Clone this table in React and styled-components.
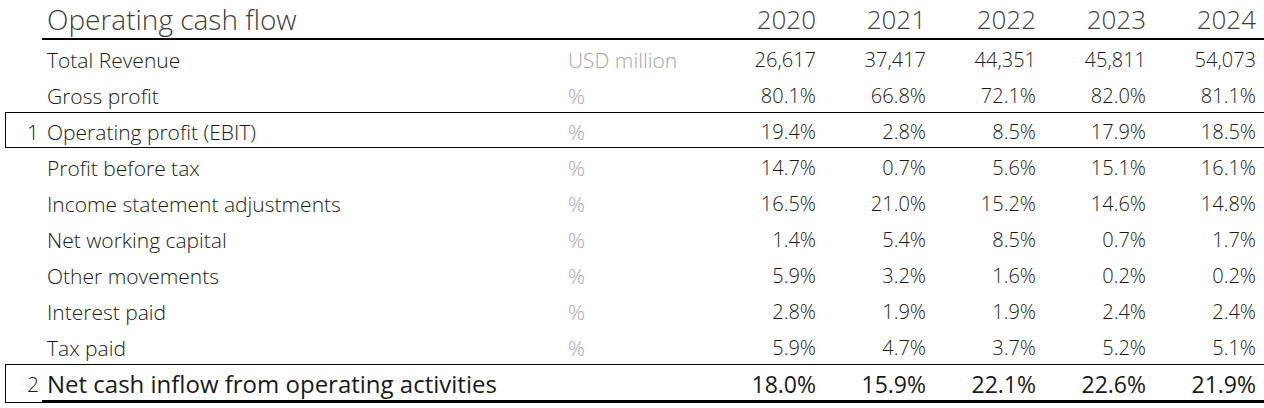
import React from "react";
import styled, { createGlobalStyle } from "styled-components";

const Global = createGlobalStyle`
  html, body { margin: 0; padding: 0; background: #fff; }
  body { font-family: "Open Sans", "Noto Sans", sans-serif; color: #1a1a1a; }
`;

const Table = styled.div`
  width: 1264px;
  display: flex;
  flex-direction: column;
`;

const Row = styled.div`
  display: flex;
  box-sizing: border-box;
  height: ${(p) => (p.$header ? 40 : p.$total ? 39 : 36)}px;
  margin-left: ${(p) => (p.$boxed ? 5 : 0)}px;
  border: ${(p) => (p.$boxed ? "1px solid #000" : "none")};
  border-right: none;
`;

const Marker = styled.div`
  box-sizing: border-box;
  width: ${(p) => (p.$boxed ? 36 : 42)}px;
  flex: none;
  display: flex;
  align-items: center;
  justify-content: flex-end;
  padding: ${(p) => (p.$total ? "0 3px 0 0" : "3px 3px 0 0")};
  font-size: 21px;
  font-weight: 300;
  color: #1a1a1a;
`;

const Body = styled.div`
  box-sizing: border-box;
  flex: 1;
  display: grid;
  grid-template-columns: 526px 140px repeat(5, 110px);
  padding: ${(p) => (p.$header ? "0 6px 4px 0" : p.$total ? "0 6px 0 0" : "3px 6px 0 0")};
  align-items: center;
  border-bottom: ${(p) => (p.$header ? "2px solid #000" : "none")};
  box-shadow: ${(p) => (p.$total ? "inset 0 -2px 0 #000" : "none")};
  font-weight: ${(p) => (p.$total ? 400 : 300)};
  color: ${(p) => (p.$header ? "#404040" : "#1a1a1a")};
  white-space: nowrap;
`;

const Label = styled.div`
  padding-left: 5px;
  font-size: ${(p) => (p.$header ? 28 : p.$total ? 24 : 21)}px;
`;

const Unit = styled.div`
  color: #a6a6a6;
  font-weight: 300;
  font-size: 21px;
`;

const Value = styled.div`
  text-align: right;
  padding-right: 2px;
  font-size: ${(p) => (p.$header ? 26 : p.$total ? 23 : 20)}px;
`;

const years = ["2020", "2021", "2022", "2023", "2024"];

const rows = [
  { label: "Total Revenue", unit: "USD million", values: ["26,617", "37,417", "44,351", "45,811", "54,073"] },
  { label: "Gross profit", unit: "%", values: ["80.1%", "66.8%", "72.1%", "82.0%", "81.1%"] },
  { label: "Operating profit (EBIT)", unit: "%", marker: "1", values: ["19.4%", "2.8%", "8.5%", "17.9%", "18.5%"] },
  { label: "Profit before tax", unit: "%", values: ["14.7%", "0.7%", "5.6%", "15.1%", "16.1%"] },
  { label: "Income statement adjustments", unit: "%", values: ["16.5%", "21.0%", "15.2%", "14.6%", "14.8%"] },
  { label: "Net working capital", unit: "%", values: ["1.4%", "5.4%", "8.5%", "0.7%", "1.7%"] },
  { label: "Other movements", unit: "%", values: ["5.9%", "3.2%", "1.6%", "0.2%", "0.2%"] },
  { label: "Interest paid", unit: "%", values: ["2.8%", "1.9%", "1.9%", "2.4%", "2.4%"] },
  { label: "Tax paid", unit: "%", values: ["5.9%", "4.7%", "3.7%", "5.2%", "5.1%"] },
  { label: "Net cash inflow from operating activities", unit: "", marker: "2", total: true, values: ["18.0%", "15.9%", "22.1%", "22.6%", "21.9%"] },
];

export default function App() {
  return (
    <>
      <Global />
      <Table>
        <Row $header>
          <Marker />
          <Body $header>
            <Label $header>Operating cash flow</Label>
            <div />
            {years.map((y) => (
              <Value key={y} $header>{y}</Value>
            ))}
          </Body>
        </Row>
        {rows.map((r) => {
          const boxed = !!r.marker;
          return (
            <Row key={r.label} $boxed={boxed} $total={r.total}>
              <Marker $boxed={boxed} $total={r.total}>{r.marker}</Marker>
              <Body $total={r.total}>
                <Label $total={r.total}>{r.label}</Label>
                <Unit>{r.unit}</Unit>
                {r.values.map((v, i) => (
                  <Value key={i} $total={r.total}>{v}</Value>
                ))}
              </Body>
            </Row>
          );
        })}
      </Table>
    </>
  );
}
